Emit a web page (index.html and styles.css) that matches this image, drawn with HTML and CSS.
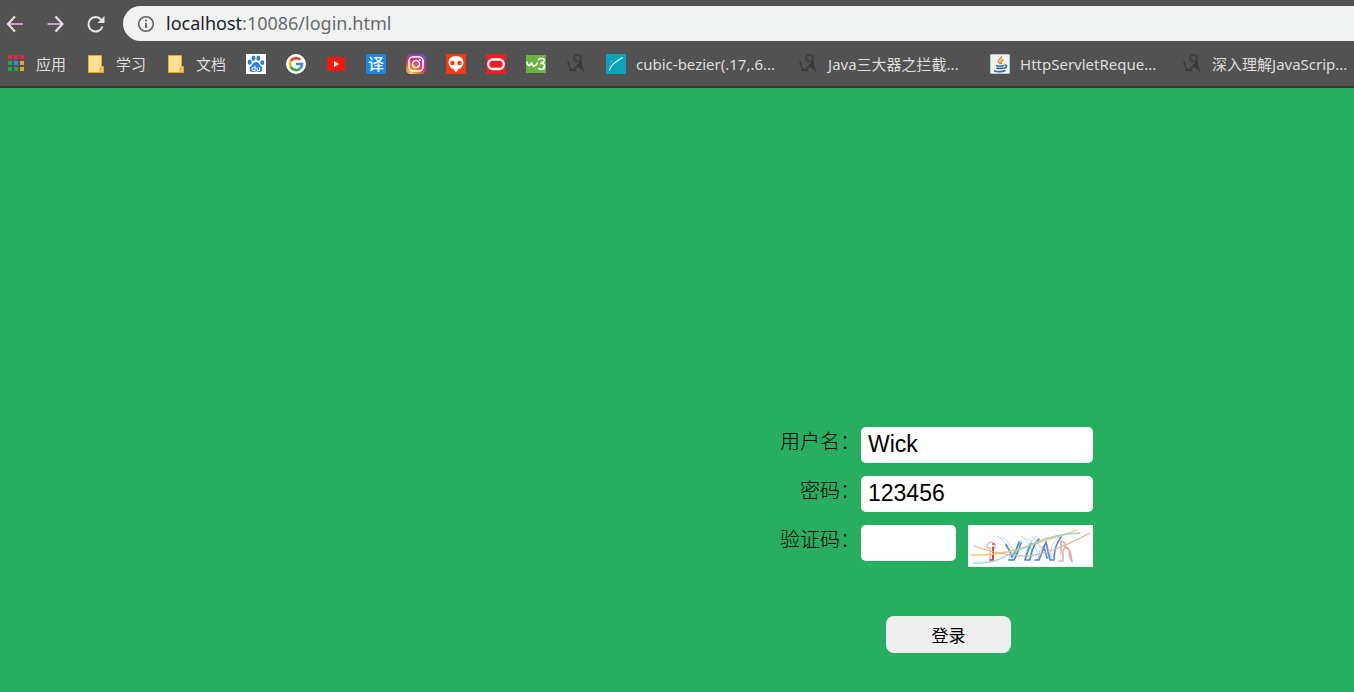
FILE: index.html
```html
<!DOCTYPE html>
<html lang="zh-CN">
<head>
<meta charset="utf-8">
<title>登录</title>
<link rel="stylesheet" href="styles.css">
</head>
<body>
<svg class="sprite" aria-hidden="true">
  <symbol id="folder" viewBox="0 0 20 20">
    <path d="M2.500 1.500h13v11.500h2v5.500h-15z" fill="#ffe08e" stroke="#e3a63c"/>
    <path d="M14 18.500v-4.500l1.500-1.500h2v6z" fill="#f5c563" stroke="#e3a63c"/>
  </symbol>
  <symbol id="figure" viewBox="0 0 20 20">
    <g fill="none" stroke="#3a3a3a" stroke-width="1.500" stroke-linecap="round" stroke-linejoin="round">
      <circle cx="11.500" cy="4" r="3.300"/>
      <path d="M2 8l2.500 7.500 4-.5 6-7M3.500 16.500h6.500M15 7q.5 6 3 11.500M12 12.500l5 3.500"/>
      <path d="M14.500 8l1 6-2.500-2.500z" fill="#3a3a3a"/>
    </g>
  </symbol>
</svg>

<header class="browser">
  <nav class="toolbar" aria-label="导航">
    <button class="tool" type="button" aria-label="后退"><svg viewBox="0 0 20 20"><path d="M18 10H3" stroke="#dfa5dc" stroke-width="1.800"/><path d="M10 2.500L3 10l7 7.500" class="line"/></svg></button>
    <button class="tool" type="button" aria-label="前进"><svg viewBox="0 0 20 20"><path d="M2.500 10H17" stroke="#dfa5dc" stroke-width="1.800"/><path d="M10.500 2.500l7 7.500-7 7.500" class="line"/></svg></button>
    <button class="tool" type="button" aria-label="刷新"><svg viewBox="0 0 20 20"><path d="M17.500 12.500A7.200 7.200 0 1 1 16 5.500" class="line"/><path d="M19.500 2v7h-7z" fill="#e8e8e8"/></svg></button>
    <div class="omnibox">
      <svg class="info" viewBox="0 0 18 18"><circle cx="9" cy="9" r="7.300" fill="none" stroke="#5f6368" stroke-width="1.600"/><path d="M9 8v5M9 4.800v1.800" stroke="#6b5a5a" stroke-width="1.800"/></svg>
      <span class="url"><span class="host">localhost</span>:10086/login.html</span>
    </div>
  </nav>

  <nav class="bookmarks" aria-label="书签">
    <a class="bookmark" href="#"><svg viewBox="0 0 20 20"><path fill="#e8283c" d="M2 1h4v4H2zM8 1h4v4H8zM14 1h4v4h-4z"/><path fill="#20a653" d="M2 7h4v4H2zM2 13h4v4H2zM8 13h4v4H8z"/><path fill="#2f8af5" d="M8 7h4v4H8z"/><path fill="#f2a02d" d="M14 7h4v4h-4zM14 13h4v4h-4z"/></svg><span>应用</span></a>
    <a class="bookmark" href="#"><svg><use href="#folder"/></svg><span>学习</span></a>
    <a class="bookmark" href="#"><svg><use href="#folder"/></svg><span>文档</span></a>
    <a class="bookmark" href="#" aria-label="百度"><svg viewBox="0 0 20 20"><path fill="#fff" d="M0 0h20v20H0z"/><g fill="#2b7de0"><ellipse cx="3.700" cy="8.200" rx="2" ry="2.600"/><ellipse cx="7.500" cy="4.200" rx="1.900" ry="2.600"/><ellipse cx="12.400" cy="4.200" rx="1.900" ry="2.600"/><ellipse cx="16.300" cy="8.500" rx="2" ry="2.500"/><path d="M10 8c2.500 0 3.200 2.500 5 4 2.500 2 1.500 6-1.500 6-1.500 0-2-.5-3.500-.5s-2 .5-3.500.5c-3 0-4-4-1.500-6C6.800 10.500 7.500 8 10 8z"/></g><path d="M9 11.500v5H7.500a1.400 1.400 0 0 1 0-3H9M11 13.500v2q0 1 1 1h1.500v-3" fill="none" stroke="#fff" stroke-width="1.100"/></svg></a>
    <a class="bookmark" href="#" aria-label="Google"><svg viewBox="0 0 20 20"><circle cx="10" cy="10" r="10" fill="#fff"/><g fill="none" stroke-width="2.700"><path d="M14.200 5.800A6 6 0 0 0 4.700 7.200" stroke="#ea4335"/><path d="M4.700 7.200a6 6 0 0 0 0 5.600" stroke="#fbbc05"/><path d="M4.700 12.800a6 6 0 0 0 9.300 1.700" stroke="#34a853"/><path d="M14 14.500A6 6 0 0 0 16 10h-6" stroke="#4285f4"/></g></svg></a>
    <a class="bookmark" href="#" aria-label="YouTube"><svg viewBox="0 0 20 20"><rect x="1" y="3" width="18" height="14" rx="3.500" fill="#f91606"/><path d="M8 7l5 3-5 3z" fill="#fff"/></svg></a>
    <a class="bookmark" href="#" aria-label="翻译"><span class="translate">译</span></a>
    <a class="bookmark" href="#" aria-label="Instagram"><svg viewBox="0 0 20 20"><defs><radialGradient id="insta" cx=".25" cy="1" r="1.200"><stop offset="0" stop-color="#ffd36a"/><stop offset=".3" stop-color="#f77b2e"/><stop offset=".6" stop-color="#d32c78"/><stop offset="1" stop-color="#5954d0"/></radialGradient></defs><rect width="20" height="20" rx="4.500" fill="url(#insta)"/><g fill="none" stroke="#fff" stroke-width="1.600"><rect x="3" y="3" width="14" height="14" rx="4"/><circle cx="10" cy="10" r="3.500"/></g><circle cx="14" cy="6" r="1" fill="#fff"/></svg></a>
    <a class="bookmark" href="#" aria-label="外星人"><svg viewBox="0 0 20 20"><path fill="#f53b10" d="M0 0h20v20H0z"/><path d="M10 2c5 0 7.500 3 7.500 6.500S14.500 15 12.500 15L10 18.500 7.500 15c-2 0-5-3-5-6.500S5 2 10 2z" fill="#fff"/><circle cx="6.500" cy="9" r="2.200" fill="#f53b10"/><circle cx="13.500" cy="9" r="2.200" fill="#f53b10"/></svg></a>
    <a class="bookmark" href="#" aria-label="Oracle"><svg viewBox="0 0 20 20"><path fill="#f11b22" d="M0 0h20v20H0z"/><rect x="2.200" y="5.500" width="15.600" height="9.500" rx="4.700" fill="none" stroke="#fff" stroke-width="2.300"/></svg></a>
    <a class="bookmark" href="#" aria-label="W3School"><svg viewBox="0 0 20 20"><path fill="#6db33f" d="M0 1h20v18H0z"/><path d="M.5 7.500q1.500 4.500 3 4t2-3q1 4 3 3.500t3-3.500" fill="none" stroke="#fff" stroke-width="1.700"/><path d="M12 6q2-2 4.500-1.500T17.500 8l-3 1.500q4-.5 4 2.500t-3 3.500q-2 0-3-1.500" fill="none" stroke="#fff" stroke-width="1.700"/></svg></a>
    <a class="bookmark" href="#" aria-label="博客"><svg><use href="#figure"/></svg></a>
    <a class="bookmark titled" href="#"><svg viewBox="0 0 20 20"><path fill="#0aa5bd" d="M0 0h20v20H0z"/><path d="M3.500 16.500C4 11 10 8 16.500 3.500" fill="none" stroke="#e5ffff" stroke-width="1.300"/><circle cx="5.500" cy="7.500" r=".6" fill="#8ee5ee"/></svg><span>cubic-bezier(.17,.6...</span></a>
    <a class="bookmark titled" href="#"><svg><use href="#figure"/></svg><span>Java三大器之拦截...</span></a>
    <a class="bookmark titled" href="#"><svg viewBox="0 0 20 20"><path fill="#edf4f5" stroke="#a9cbd3" d="M.5.5h19v19H.5z"/><path d="M11.500 2c1 2.500-4.500 4-3 6l2 2M13.500 5.500c-4 2-2.500 3-2 4.500" fill="none" stroke="#ea7b1d" stroke-width="1.500"/><path d="M6 11.500q4 1.500 8 0M6.500 14q3.500 1 7 0M4 17q6 1.500 11.500-.5M14.500 11q3 0 1.500 2.500l-2 1" fill="none" stroke="#2f65a5" stroke-width="1.500"/></svg><span>HttpServletReque...</span></a>
    <a class="bookmark titled" href="#"><svg><use href="#figure"/></svg><span>深入理解JavaScrip...</span></a>
  </nav>
</header>

<main class="page">
  <form class="login">
    <div class="row">
      <label for="username">用户名：</label>
      <input id="username" type="text" value="Wick">
    </div>
    <div class="row">
      <label for="password">密码：</label>
      <input id="password" type="text" value="123456">
    </div>
    <div class="row">
      <label for="code">验证码：</label>
      <div class="code">
        <input id="code" type="text">
        <svg class="captcha" viewBox="0 0 125 42" role="img" aria-label="验证码图片">
          <path fill="#fff" d="M0 0h125v42H0z"/>
          <g fill="none" stroke-linecap="round" stroke-linejoin="round">
            <path d="M20 23h-1v-4h2v-2h4v2h2v4h-1M22 23v12M19 23h3" stroke="#dcb0a4"/>
            <path d="M25 22v13h-3M25 19h1" stroke="#d0303a" stroke-width="1.700"/>
            <path d="M29 11q10 3 16 24M34 12q8 4 14 18M48 30q-1-10 6-15M53 11q9 5 12 20M58 13q8 3 14 21M59 31q0-15 10-20M64 12q8 6 12 17M83 34q-2-15 8-22M40 35l3-8M70 35l2-10" stroke="#b9d6ef"/>
            <path d="M38 20q4 5 6 12 4-5 7-15M41 35h5q4-7 7-17M57 35h5q2-14 9-21M57 35q3-11 6-16" stroke="#3b8bd0" stroke-width="1.700"/>
            <path d="M67 35h4l7-18 4 18h4q0-14 7-23M75 22q3 4 4 11" stroke="#5c87d8" stroke-width="1.700"/>
            <path d="M91 36h4V25q4-6 6 0 0 8 3 12M93 29V16l4 2v5q6-1 7 14" stroke="#dfb3a8" stroke-width="1.500"/>
            <path d="M3 30q22 1 44-5 28-8 62-20" stroke="#f0c668" stroke-width="1.300"/>
            <path d="M6 21q28 10 53 10 22-1 63-23" stroke="#dcb59a" stroke-width="1.200"/>
            <path d="M6 38q17 1 30-6l33-15Q88 9 112 8" stroke="#9ed1c6" stroke-width="1.300"/>
          </g>
        </svg>
      </div>
    </div>
    <button class="submit" type="submit">登录</button>
  </form>
</main>
</body>
</html>
```
FILE: styles.css
```css
* { box-sizing: border-box; }

body {
  margin: 0;
  min-height: 100vh;
  display: flex;
  flex-direction: column;
  background: #28ae60;
  font-family: "Noto Sans", "Noto Sans CJK SC", sans-serif;
  overflow-x: hidden;
}

.sprite { display: none; }

.browser {
  background: #525252;
  border-bottom: 2px solid #363636;
}

.toolbar {
  display: flex;
  align-items: center;
  gap: 20px;
  padding: 6px 0 0 5px;
}

.tool {
  flex: none;
  width: 20px;
  height: 20px;
  padding: 0;
  border: 0;
  background: none;
}

.tool svg { display: block; width: 20px; height: 20px; }

.line { fill: none; stroke: #e8e8e8; stroke-width: 2; }

.omnibox {
  flex: 1;
  display: flex;
  align-items: center;
  gap: 11px;
  height: 35px;
  margin-left: -2px;
  padding-left: 14px;
  border-radius: 18px 0 0 18px;
  background: #f1f3f2;
}

.info { width: 18px; height: 18px; }

.url {
  padding-bottom: 2px;
  color: #686b6e;
  font-size: 18px;
  line-height: 24px;
}

.host { color: #202124; }

.bookmarks {
  display: flex;
  align-items: center;
  gap: 20px;
  height: 45px;
  padding-left: 6px;
  overflow: hidden;
}

.bookmark {
  flex: none;
  display: flex;
  align-items: center;
  gap: 10px;
  color: #dedede;
  font-size: 15px;
  line-height: 20px;
  text-decoration: none;
  white-space: nowrap;
}

.bookmark svg { width: 20px; height: 20px; }

.titled span { width: 142px; }

.translate {
  width: 20px;
  height: 20px;
  border-radius: 2px;
  background: #1b87e6;
  color: #fff;
  font-size: 16px;
  font-weight: 500;
  text-align: center;
}

.page {
  flex: 1;
  display: flex;
  justify-content: flex-end;
  padding: 339px 261px 39px 0;
}

.login {
  display: flex;
  flex-direction: column;
  gap: 13px;
}

.row {
  display: grid;
  grid-template-columns: 80px 232px;
  column-gap: 1px;
}

.row label {
  color: #000;
  font-size: 20px;
  font-weight: 300;
  line-height: 30px;
  text-align: right;
}

.row input {
  width: 100%;
  min-width: 0;
  height: 36px;
  padding: 0 7px 2px;
  border: 0;
  border-radius: 5px;
  background: #fff;
  color: #000;
  font: 23px/28px "Liberation Sans", Arial, sans-serif;
}

.code {
  display: grid;
  grid-template-columns: 95px 125px;
  justify-content: space-between;
}

.captcha { width: 125px; height: 42px; }

.submit {
  width: 125px;
  height: 37px;
  margin: 36px 0 0 106px;
  padding: 0;
  border: 0;
  border-radius: 8px;
  background: #efefef;
  color: #000;
  font-family: inherit;
  font-size: 17px;
}
```
